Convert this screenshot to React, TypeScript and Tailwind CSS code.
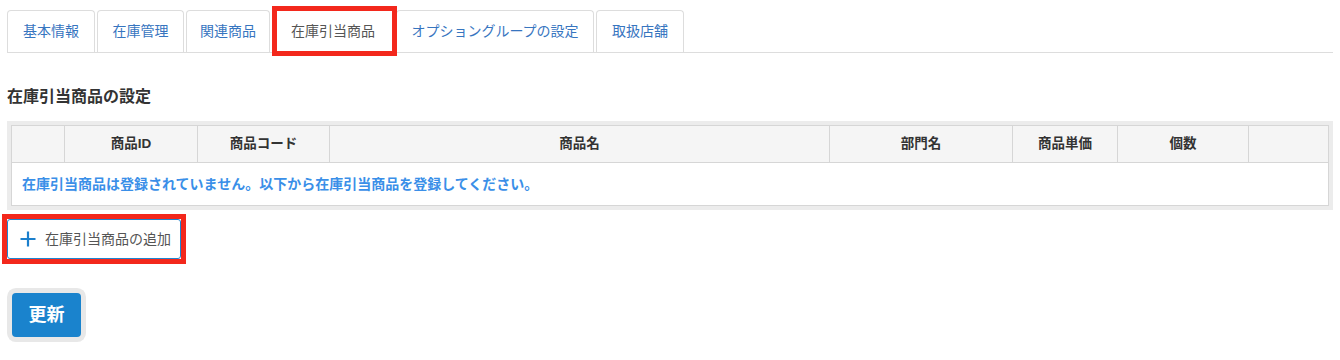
const tabs = [
  { label: '基本情報', width: 'w-[88px]' },
  { label: '在庫管理', width: 'w-[87px]' },
  { label: '関連商品', width: 'w-[84px]' },
  { label: '在庫引当商品', width: 'w-[122px]' },
  { label: 'オプショングループの設定', width: 'w-[198px]' },
  { label: '取扱店舗', width: 'w-[88px]' }
];
const activeTab = '在庫引当商品';

const columns = [
  { label: '', width: 'w-[53px]' },
  { label: '商品ID', width: 'w-[133px]' },
  { label: '商品コード', width: 'w-[132px]' },
  { label: '商品名', width: '' },
  { label: '部門名', width: 'w-[183px]' },
  { label: '商品単価', width: 'w-[105px]' },
  { label: '個数', width: 'w-[131px]' },
  { label: '', width: 'w-[80px]' }
];

export default function App() {
  return (
    <div
      className="min-h-[360px] bg-white px-[7px] text-[#333]"
      style={{ fontFamily: '"Liberation Sans", "Noto Sans CJK JP", sans-serif' }}
    >
      {/* Tabs */}
      <nav className="flex gap-[2px] border-b border-[#ddd] pt-[10px]">
        {tabs.map((tab) =>
          tab.label === activeTab ? (
            <div
              key={tab.label}
              className={`relative flex h-[42px] items-center justify-center bg-white text-[14px] text-[#555] ${tab.width}`}
            >
              {tab.label}
              {/* annotation box */}
              <span className="pointer-events-none absolute -top-[4px] -bottom-[4px] left-0 -right-[3px] border-[5px] border-[#f3281c]" />
            </div>
          ) : (
            <div
              key={tab.label}
              className={`flex h-[42px] items-center justify-center rounded-t-[4px] border-x border-t border-[#ddd] text-[14px] text-[#3775bf] ${tab.width}`}
            >
              {tab.label}
            </div>
          )
        )}
      </nav>

      <h2 className="mt-[32px] text-[16px] font-bold leading-[24px] text-[#333]">在庫引当商品の設定</h2>

      {/* Table */}
      <div className="mt-[12px] bg-[#ececec] p-[4px]">
        <table className="w-full table-fixed border-collapse border border-[#d6d6d6] bg-white">
          <colgroup>
            {columns.map((c, i) => (
              <col key={i} className={c.width} />
            ))}
          </colgroup>
          <thead>
            <tr className="h-[37px] bg-[#f5f5f5]">
              {columns.map((c, i) => (
                <th key={i} className="border border-[#d6d6d6] text-center text-[13.5px] font-bold text-[#333]">
                  {c.label}
                </th>
              ))}
            </tr>
          </thead>
          <tbody>
            <tr className="h-[43px]">
              <td colSpan={8} className="px-[10px] text-[14px] font-bold text-[#3a8fe8]">
                在庫引当商品は登録されていません。以下から在庫引当商品を登録してください。
              </td>
            </tr>
          </tbody>
        </table>
      </div>

      {/* Add button */}
      <div className="mt-[9px]">
        <button className="relative flex h-[40px] w-[174px] items-center gap-[9px] rounded-[3px] border border-[#1f84d0] bg-white pl-[12px] text-[14px] text-[#555]">
          <svg width="16" height="16" viewBox="0 0 16 16" className="text-[#1b7fcc]">
            <path d="M8 0.5v15M0.5 8h15" stroke="currentColor" strokeWidth="2.2" fill="none" />
          </svg>
          在庫引当商品の追加
          <span className="pointer-events-none absolute -top-[6px] -bottom-[6px] -left-[6px] -right-[6px] border-[5px] border-[#f3281c]" />
        </button>
      </div>

      {/* Submit */}
      <div className="mt-[34px] pl-[5px]">
        <button className="flex h-[44px] w-[69px] items-center justify-center rounded-[4px] bg-[#1a83cd] text-[18px] font-bold text-white ring-[5px] ring-[#e8e8e8]">
          更新
        </button>
      </div>
    </div>
  );
}
